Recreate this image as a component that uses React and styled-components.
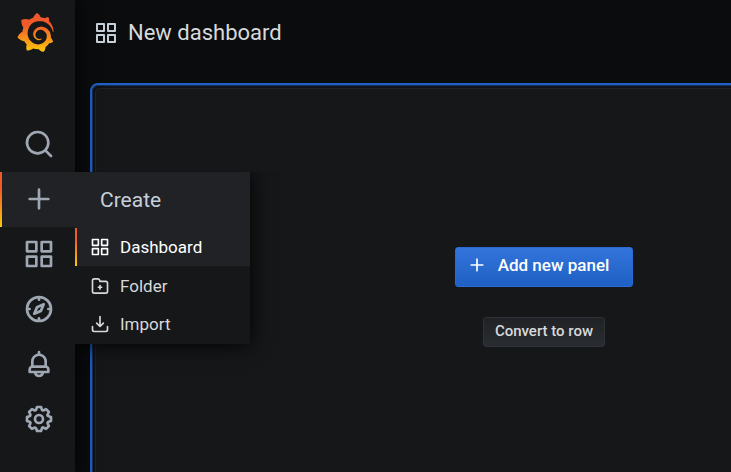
import React from "react";
import styled, { createGlobalStyle } from "styled-components";
import { SiGrafana } from "react-icons/si";

const GlobalStyle = createGlobalStyle`
  * { box-sizing: border-box; }
  body {
    margin: 0;
    background: #0b0c0e;
    color: #c7d0d9;
    font-family: Roboto, "Liberation Sans", sans-serif;
  }
  button { font-family: inherit; cursor: pointer; }
`;

const paths = {
  apps: "M10,13H3a1,1,0,0,0-1,1v7a1,1,0,0,0,1,1h7a1,1,0,0,0,1-1V14A1,1,0,0,0,10,13ZM9,20H4V15H9ZM21,2H14a1,1,0,0,0-1,1v7a1,1,0,0,0,1,1h7a1,1,0,0,0,1-1V3A1,1,0,0,0,21,2ZM20,9H15V4h5Zm1,4H14a1,1,0,0,0-1,1v7a1,1,0,0,0,1,1h7a1,1,0,0,0,1-1V14A1,1,0,0,0,21,13Zm-1,7H15V15h5ZM10,2H3A1,1,0,0,0,2,3v7a1,1,0,0,0,1,1h7a1,1,0,0,0,1-1V3A1,1,0,0,0,10,2ZM9,9H4V4H9Z",
  search: "M21.71,20.29,18,16.61A9,9,0,1,0,16.61,18l3.68,3.68a1,1,0,0,0,1.42,0A1,1,0,0,0,21.71,20.29ZM11,18a7,7,0,1,1,7-7A7,7,0,0,1,11,18Z",
  plus: "M19,11H13V5a1,1,0,0,0-2,0v6H5a1,1,0,0,0,0,2h6v6a1,1,0,0,0,2,0V13h6a1,1,0,0,0,0-2Z",
  compass: "M12,2A10,10,0,1,0,22,12,10,10,0,0,0,12,2Zm1,17.93V19a1,1,0,0,0-2,0v.93A8,8,0,0,1,4.07,13H5a1,1,0,0,0,0-2H4.07A8,8,0,0,1,11,4.07V5a1,1,0,0,0,2,0V4.07A8,8,0,0,1,19.93,11H19a1,1,0,0,0,0,2h.93A8,8,0,0,1,13,19.93ZM15.14,7.55l-5,2.12a1,1,0,0,0-.52.52l-2.12,5a1,1,0,0,0,.21,1.1,1,1,0,0,0,.7.29.93.93,0,0,0,.4-.08l5-2.12a1,1,0,0,0,.52-.52l2.12-5a1,1,0,0,0-1.31-1.31Zm-2.49,5.1-2.28,1,1-2.28,2.28-1Z",
  bell: "M18,13.18V10a6,6,0,0,0-5-5.91V3a1,1,0,0,0-2,0V4.09A6,6,0,0,0,6,10v3.18A3,3,0,0,0,4,16v2a1,1,0,0,0,1,1H8.14a4,4,0,0,0,7.72,0H19a1,1,0,0,0,1-1V16A3,3,0,0,0,18,13.18ZM8,10a4,4,0,0,1,8,0v3H8Zm4,10a2,2,0,0,1-1.72-1h3.44A2,2,0,0,1,12,20Zm6-3H6V16a1,1,0,0,1,1-1H17a1,1,0,0,1,1,1Z",
  cog: "M21.32,9.55l-1.89-.63.89-1.78A1,1,0,0,0,20.13,6L18,3.87a1,1,0,0,0-1.15-.19l-1.78.89-.63-1.89A1,1,0,0,0,13.5,2h-3a1,1,0,0,0-.95.68L8.92,4.57,7.14,3.68A1,1,0,0,0,6,3.87L3.87,6a1,1,0,0,0-.19,1.15l.89,1.78-1.89.63A1,1,0,0,0,2,10.5v3a1,1,0,0,0,.68.95l1.89.63-.89,1.78A1,1,0,0,0,3.87,18L6,20.13a1,1,0,0,0,1.15.19l1.78-.89.63,1.89a1,1,0,0,0,.95.68h3a1,1,0,0,0,.95-.68l.63-1.89,1.78.89A1,1,0,0,0,18,20.13L20.13,18a1,1,0,0,0,.19-1.15l-.89-1.78,1.89-.63A1,1,0,0,0,22,13.5v-3A1,1,0,0,0,21.32,9.55ZM20,12.78l-1.2.4A2,2,0,0,0,17.64,16l.57,1.14-1.1,1.1L16,17.64a2,2,0,0,0-2.79,1.16l-.4,1.2H11.22l-.4-1.2A2,2,0,0,0,8,17.64l-1.14.57-1.1-1.1L6.36,16A2,2,0,0,0,5.2,13.18L4,12.78V11.22l1.2-.4A2,2,0,0,0,6.36,8L5.79,6.89l1.1-1.1L8,6.36A2,2,0,0,0,10.82,5.2l.4-1.2h1.56l.4,1.2A2,2,0,0,0,16,6.36l1.14-.57,1.1,1.1L17.64,8a2,2,0,0,0,1.16,2.79l1.2.4ZM12,8a4,4,0,1,0,4,4A4,4,0,0,0,12,8Zm0,6a2,2,0,1,1,2-2A2,2,0,0,1,12,14Z",
  folder: "M14,12.5H13v-1a1,1,0,0,0-2,0v1H10a1,1,0,0,0,0,2h1v1a1,1,0,0,0,2,0v-1h1a1,1,0,0,0,0-2Zm5-7H12.72l-.32-1a3,3,0,0,0-2.84-2H5a3,3,0,0,0-3,3v13a3,3,0,0,0,3,3H19a3,3,0,0,0,3-3V8.5A3,3,0,0,0,19,5.5Zm1,13a1,1,0,0,1-1,1H5a1,1,0,0,1-1-1V5.5a1,1,0,0,1,1-1H9.56a1,1,0,0,1,.95.68l.54,1.64A1,1,0,0,0,12,7.5h7a1,1,0,0,1,1,1Z",
  import: "M21,14a1,1,0,0,0-1,1v4a1,1,0,0,1-1,1H5a1,1,0,0,1-1-1V15a1,1,0,0,0-2,0v4a3,3,0,0,0,3,3H19a3,3,0,0,0,3-3V15A1,1,0,0,0,21,14Zm-9.71,1.71a1,1,0,0,0,.33.21.94.94,0,0,0,.76,0,1,1,0,0,0,.33-.21l4-4a1,1,0,0,0-1.42-1.42L13,12.59V3a1,1,0,0,0-2,0v9.59l-2.29-2.3a1,1,0,1,0-1.42,1.42Z",
};

const Svg = styled.svg`
  display: block;
  flex: none;
  width: ${(p) => p.$size}px;
  height: ${(p) => p.$size}px;
  fill: currentColor;
`;

const Icon = ({ name, size }) => (
  <Svg $size={size} viewBox="0 0 24 24" aria-hidden="true">
    <path d={paths[name]} />
  </Svg>
);

const Page = styled.div`
  display: flex;
  height: 100vh;
  overflow: hidden;
`;

const Sidebar = styled.nav`
  position: relative;
  z-index: 1;
  display: flex;
  flex-direction: column;
  gap: 52px;
  flex: none;
  width: 75px;
  background: #161719;
  box-shadow: 0 0 20px #000;
`;

const HomeLink = styled.a`
  display: flex;
  justify-content: center;
  height: 65px;
  padding: 13px 5px 0 0;
`;

const Logo = styled(SiGrafana)`
  width: 39px;
  height: 39px;
  fill: url(#logo-gradient);
`;

const GradientDefs = styled.svg`
  position: absolute;
  width: 0;
  height: 0;
`;

const NavList = styled.div`
  display: grid;
  grid-template-rows: repeat(6, 1fr);
  height: 329px;
`;

const NavItem = styled.div`
  position: relative;
  display: flex;
  background: ${(p) => (p.$active ? "#202226" : "transparent")};
`;

const Accent = styled.span`
  position: absolute;
  z-index: 1;
  top: 0;
  bottom: 0;
  left: 0;
  width: 2px;
  background: linear-gradient(#f05a28 30%, #fbca0a);
`;

const NavButton = styled.button`
  display: flex;
  flex: 1;
  align-items: center;
  justify-content: center;
  padding: 0 0 0 3px;
  border: 0;
  background: transparent;
  color: #9fa7b3;
`;

const Flyout = styled.div`
  position: absolute;
  top: 0;
  left: 100%;
  width: 175px;
  background: #161719;
  box-shadow: 0 0 20px #000;
  clip-path: inset(0 -30px -30px 0);
`;

const FlyoutTitle = styled.div`
  display: flex;
  align-items: center;
  height: 56px;
  padding-left: 25px;
  background: #202226;
  color: #c7d0d9;
  font-size: 21px;
`;

const MenuList = styled.div`
  display: grid;
  grid-template-rows: repeat(3, 1fr);
  height: 116px;
`;

const MenuLink = styled.a`
  position: relative;
  display: flex;
  align-items: center;
  gap: 10px;
  padding-left: 15px;
  background: ${(p) => (p.$active ? "#202226" : "transparent")};
  color: ${(p) => (p.$active ? "#ffffff" : "#d8d9da")};
  font-size: 17px;
  text-decoration: none;
`;

const Main = styled.main`
  display: flex;
  flex: 1;
  flex-direction: column;
  min-width: 0;
  padding-left: 15px;
`;

const Toolbar = styled.header`
  display: flex;
  align-items: center;
  gap: 10px;
  flex: none;
  height: 65px;
  padding-left: 4px;
`;

const Title = styled.h1`
  margin: 0;
  color: #d8d9da;
  font-size: 22px;
  font-weight: 400;
`;

const Panel = styled.section`
  display: flex;
  flex: none;
  min-width: 908px;
  min-height: 428px;
  margin-top: 18px;
  padding: 3px;
  border: 2px solid #1f60c4;
  border-radius: 8px;
  background: #111217;
  box-shadow: inset 0 0 0 1px #17305a;
`;

const PanelBody = styled.div`
  display: flex;
  flex: 1;
  flex-direction: column;
  align-items: center;
  justify-content: center;
  gap: 30px;
  border: 1px solid #202226;
  border-radius: 4px;
  background: #161719;
`;

const PrimaryButton = styled.button`
  display: flex;
  align-items: center;
  gap: 11px;
  height: 40px;
  padding: 0 23px 4px 11px;
  border: 1px solid #2a6ad6;
  border-radius: 3px;
  background: linear-gradient(#3274d9, #1f60c4);
  color: #fff;
  font-size: 17px;
  font-weight: 500;
`;

const SecondaryButton = styled.button`
  height: 30px;
  padding: 0 11px 2px;
  border: 1px solid #2c3235;
  border-radius: 3px;
  background: linear-gradient(#202226, #292c30);
  color: #d8d9da;
  font-size: 15px;
  font-weight: 500;
`;

const navItems = [
  { icon: "search", label: "Search" },
  { icon: "plus", label: "Create", active: true },
  { icon: "apps", label: "Dashboards" },
  { icon: "compass", label: "Explore" },
  { icon: "bell", label: "Alerting" },
  { icon: "cog", label: "Configuration" },
];

const createItems = [
  { icon: "apps", label: "Dashboard", active: true },
  { icon: "folder", label: "Folder" },
  { icon: "import", label: "Import" },
];

const CreateMenu = () => (
  <Flyout>
    <FlyoutTitle>Create</FlyoutTitle>
    <MenuList>
      {createItems.map(({ icon, label, active }) => (
        <MenuLink key={label} href={`#${label.toLowerCase()}`} $active={active}>
          {active && <Accent />}
          <Icon name={icon} size={20} />
          {label}
        </MenuLink>
      ))}
    </MenuList>
  </Flyout>
);

export default function App() {
  return (
    <>
      <GlobalStyle />
      <GradientDefs aria-hidden="true">
        <linearGradient id="logo-gradient" x1="0" y1="1" x2="0" y2="0">
          <stop offset="0" stopColor="#fcc80c" />
          <stop offset="0.7" stopColor="#f1592a" />
        </linearGradient>
      </GradientDefs>
      <Page>
        <Sidebar>
          <HomeLink href="#home" aria-label="Home">
            <Logo />
          </HomeLink>
          <NavList>
            {navItems.map(({ icon, label, active }) => (
              <NavItem key={label} $active={active}>
                {active && <Accent />}
                <NavButton type="button" aria-label={label}>
                  <Icon name={icon} size={32} />
                </NavButton>
                {active && <CreateMenu />}
              </NavItem>
            ))}
          </NavList>
        </Sidebar>
        <Main>
          <Toolbar>
            <Icon name="apps" size={24} />
            <Title>New dashboard</Title>
          </Toolbar>
          <Panel>
            <PanelBody>
              <PrimaryButton type="button">
                <Icon name="plus" size={20} />
                Add new panel
              </PrimaryButton>
              <SecondaryButton type="button">Convert to row</SecondaryButton>
            </PanelBody>
          </Panel>
        </Main>
      </Page>
    </>
  );
}
